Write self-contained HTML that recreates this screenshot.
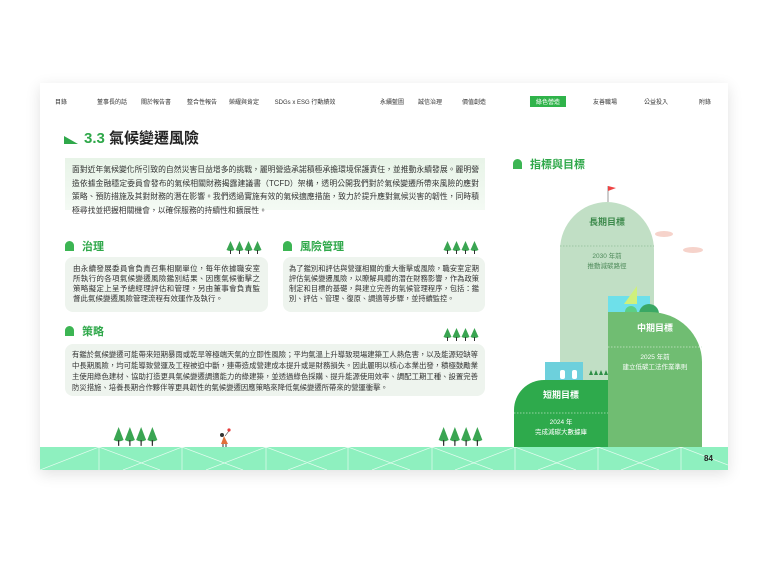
<!DOCTYPE html>
<html><head><meta charset="utf-8"><style>
*{margin:0;padding:0;box-sizing:border-box}
body{width:768px;height:579px;background:#fff;position:relative;overflow:hidden;font-family:"Liberation Sans","Noto Sans CJK TC",sans-serif;color:#333}
.page{position:absolute;left:40px;top:83px;width:688px;height:387px;background:#fff;box-shadow:0 4px 14px rgba(0,0,0,.12)}
.a{position:absolute}
.nav{position:absolute;top:97px;font-size:6px;color:#333;white-space:nowrap;transform:translateX(-50%)}
.act{background:#2fb34a;color:#fff;padding:1px 6px}
.h{position:absolute;font-size:11px;font-weight:bold;color:#2fa84a;white-space:nowrap}
.h i{display:inline-block;width:9px;height:10px;background:#3cb553;border-radius:5px 5px 0 0;margin-right:8px;vertical-align:-1px}
.box{position:absolute;background:#eef4ee;border-radius:8px;font-size:7.5px;color:#333;padding:7px 8px;line-height:10px;text-align:justify}
.t{position:absolute;font-size:6.5px;line-height:10px;text-align:center;white-space:nowrap}
</style></head><body>
<div class="page"></div>
<div class="nav" style="left:61px">目錄</div>
<div class="nav" style="left:112px">董事長的話</div>
<div class="nav" style="left:156px">關於報告書</div>
<div class="nav" style="left:202px">整合性報告</div>
<div class="nav" style="left:244px">榮耀與肯定</div>
<div class="nav" style="left:305px">SDGs x ESG 行動績效</div>
<div class="nav" style="left:392px">永續藍圖</div>
<div class="nav" style="left:430px">誠信治理</div>
<div class="nav" style="left:474px">價值創造</div>
<div class="nav act" style="left:548px;top:96px">綠色營造</div>
<div class="nav" style="left:605px">友善職場</div>
<div class="nav" style="left:656px">公益投入</div>
<div class="nav" style="left:705px">附錄</div>

<svg class="a" style="left:64px;top:134px" width="16" height="10"><polygon points="0,10 14,10 0,2" fill="#2fa84a"/></svg>
<div class="a" style="left:84px;top:127px;font-size:15px;font-weight:bold;color:#222;white-space:nowrap"><span style="color:#2fa84a">3.3</span> 氣候變遷風險</div>

<div class="box" style="left:65px;top:158px;width:420px;height:52px;padding:5px 6px 0 7px;line-height:13.5px;font-size:7.8px;background:linear-gradient(180deg,#e8f4e8,#f4faf4);border-radius:0">面對近年氣候變化所引致的自然災害日益增多的挑戰，麗明營造承諾積極承擔環境保護責任，並推動永續發展。麗明營造依據金融穩定委員會發布的氣候相關財務揭露建議書（TCFD）架構，透明公開我們對於氣候變遷所帶來風險的應對策略、預防措施及其對財務的潛在影響。我們透過實施有效的氣候適應措施，致力於提升應對氣候災害的韌性，同時積極尋找並把握相關機會，以確保服務的持續性和擴展性。</div>

<div class="h" style="left:65px;top:238px"><i></i>治理</div>
<div class="h" style="left:283px;top:238px"><i></i>風險管理</div>
<div class="box" style="left:65px;top:257px;width:203px;height:55px">由永續發展委員會負責召集相關單位，每年依據職安室所執行的各項氣候變遷風險鑑別結果、因應氣候衝擊之策略擬定上呈予總經理評估和管理，另由董事會負責監督此氣候變遷風險管理流程有效運作及執行。</div>
<div class="box" style="left:283px;top:257px;width:202px;height:55px;font-size:7.2px;padding:7px 6px">為了鑑別和評估與營運相關的重大衝擊或風險，職安室定期評估氣候變遷風險，以瞭解具體的潛在財務影響，作為政策制定和目標的基礎，與建立完善的氣候管理程序，包括：鑑別、評估、管理、復原、調適等步驟，並持續監控。</div>

<div class="h" style="left:65px;top:323px"><i></i>策略</div>
<div class="box" style="left:65px;top:344px;width:420px;height:52px;padding:5px 7px;line-height:11px;font-size:7.35px">有鑑於氣候變遷可能帶來短期暴雨或乾旱等極端天氣的立即性風險；平均氣溫上升導致現場建築工人熱危害，以及能源短缺等中長期風險，均可能導致營運及工程被迫中斷，連帶造成營建成本提升或是財務損失。因此麗明以核心本業出發，積極鼓勵業主使用綠色建材、協助打造更具氣候變遷調適能力的綠建築，並透過綠色採購、提升能源使用效率、調配工期工種、設置完善防災措施、培養長期合作夥伴等更具韌性的氣候變遷因應策略來降低氣候變遷所帶來的營運衝擊。</div>

<svg width="0" height="0" style="position:absolute"><defs><g id="tr"><path d="M4.5 0 L8.5 9 Q4.5 11 0.5 9 Z" fill="#3aa552"/><rect x="4" y="9" width="1" height="4" fill="#333"/></g>
<g id="t4"><use href="#tr" x="0"/><use href="#tr" x="9"/><use href="#tr" x="18"/><use href="#tr" x="27"/></g></defs></svg>
<svg class="a" style="left:226px;top:241px" width="36" height="14"><use href="#t4"/></svg>
<svg class="a" style="left:443px;top:241px" width="36" height="14"><use href="#t4"/></svg>
<svg class="a" style="left:443px;top:328px" width="36" height="14"><use href="#t4"/></svg>
<svg class="a" style="left:113px;top:427px" width="46" height="20"><g transform="scale(1.25,1.45)"><use href="#t4"/></g></svg>
<svg class="a" style="left:438px;top:427px" width="46" height="20"><g transform="scale(1.25,1.45)"><use href="#t4"/></g></svg>
<svg class="a" style="left:218px;top:428px" width="16" height="20"><circle cx="4" cy="7" r="2" fill="#333"/><path d="M6 8 L3 16 L10 16 Z" fill="#e2703a"/><line x1="7" y1="8" x2="11" y2="3" stroke="#333" stroke-width=".6"/><circle cx="11" cy="2" r="1.6" fill="#e53b3b"/><line x1="5" y1="16" x2="5" y2="19" stroke="#333"/><line x1="8" y1="16" x2="8" y2="19" stroke="#333"/></svg>

<!-- right -->
<div class="h" style="left:513px;top:156px;font-size:11px"><i></i>指標與目標</div>
<svg class="a" style="left:500px;top:180px" width="228" height="270">
<line x1="108" y1="6" x2="108" y2="22" stroke="#999" stroke-width="1"/>
<path d="M108 6 L116 8 L108 11 Z" fill="#e44"/>
<path d="M60 270 V70 A47 48 0 0 1 154 70 V270 Z" fill="#c1dfc5"/>
<ellipse cx="164" cy="54" rx="9" ry="3" fill="#f6d3cb"/>
<ellipse cx="193" cy="70" rx="10" ry="3" fill="#f6d3cb"/>
<rect x="108" y="116" width="42" height="18" fill="#6ee0ea"/>
<polygon points="124,124 137,106 137,124" fill="#cff07c"/>
<circle cx="131" cy="132" r="6" fill="#5ccf85"/>
<circle cx="149" cy="134" r="10" fill="#3aa864"/>
<path d="M108 270 V132 H150 A52 50 0 0 1 202 182 V270 Z" fill="#70bd72"/>
<rect x="45" y="182" width="38" height="18" fill="#6dd0dc"/>
<rect x="60" y="190" width="5" height="9" rx="2" fill="#fff"/><rect x="72" y="190" width="5" height="9" rx="2" fill="#fff"/>
<g fill="#2e8f46"><path d="M91 190 l2 5 h-4z"/><path d="M96 190 l2 5 h-4z"/><path d="M101 190 l2 5 h-4z"/><path d="M106 190 l2 5 h-4z"/></g>
<path d="M14 270 V230 A30 30 0 0 1 44 200 H108 V270 Z" fill="#2eaa4c"/>
<g stroke-dasharray="1.5 1.5" stroke-width=".7"><line x1="60" y1="66" x2="154" y2="66" stroke="#8fbf97"/><line x1="108" y1="167" x2="202" y2="167" stroke="#c9e8ca"/><line x1="14" y1="233" x2="108" y2="233" stroke="#b6e2be"/></g>
</svg>
<div class="t" style="left:560px;width:94px;top:217px;font-size:9px;font-weight:bold;color:#3d8a4c">長期目標</div>
<div class="t" style="left:560px;width:94px;top:252px;color:#4e8a5a">2030 年前<br>推動減碳路徑</div>
<div class="t" style="left:608px;width:94px;top:323px;font-size:9px;font-weight:bold;color:#fff">中期目標</div>
<div class="t" style="left:608px;width:94px;top:353px;color:#fff">2025 年前<br>建立低碳工法作業準則</div>
<div class="t" style="left:514px;width:94px;top:390px;font-size:9px;font-weight:bold;color:#fff">短期目標</div>
<div class="t" style="left:514px;width:94px;top:418px;color:#fff">2024 年<br>完成減碳大數據庫</div>

<svg class="a" style="left:40px;top:447px" width="688" height="23">
<rect width="688" height="23" fill="#8ef0bf"/>
<g stroke="#fff" stroke-width=".7" fill="none" opacity=".75">
<path d="M0 23 L59 0 L120 23 M59 0 V23 M142 0 V23 M83 23 L142 0 L203 23 M226 0 V23 M166 23 L226 0 L287 23 M308 0 V23 M248 23 L308 0 L370 23 M392 0 V23 M332 23 L392 0 L453 23 M475 0 V23 M415 23 L475 0 L536 23 M558 0 V23 M498 23 L558 0 L619 23 M641 0 V23 M581 23 L641 0 L688 18"/>
</g></svg>
<div class="a" style="left:704px;top:454px;font-size:8px;font-weight:bold;color:#222">84</div>
</body></html>
